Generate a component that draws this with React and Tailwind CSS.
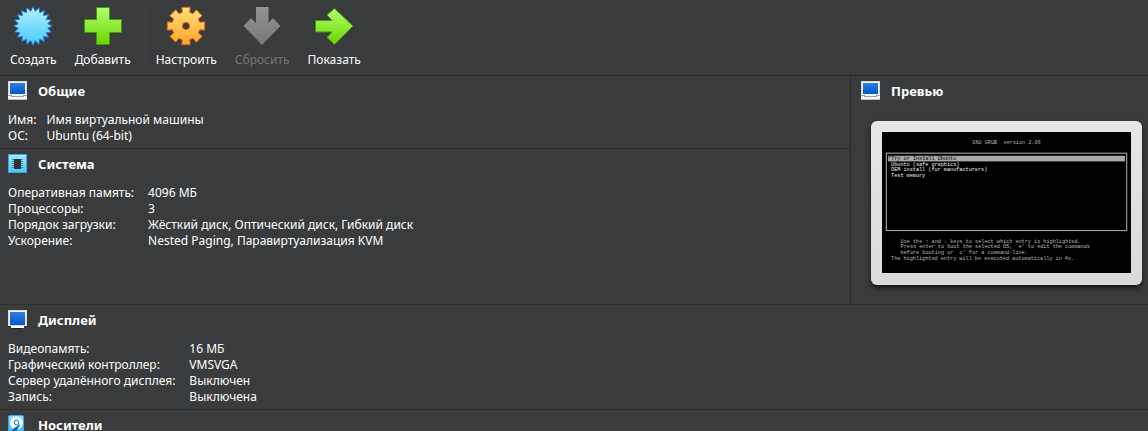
const starPoints = Array.from({ length: 40 }, (_, i) => {
  const r = i % 2 === 0 ? 19.4 : 15;
  const a = (i * Math.PI) / 20 - Math.PI / 2;
  return `${(20 + r * Math.cos(a)).toFixed(2)},${(20 + r * Math.sin(a)).toFixed(2)}`;
}).join(' ');

const gearPoints = Array.from({ length: 8 }, (_, i) => {
  const base = (i * 45 - 90) * (Math.PI / 180);
  return [[-0.27, 14.2], [-0.22, 19.2], [0.22, 19.2], [0.27, 14.2]]
    .map(([d, r]) => `${(20 + r * Math.cos(base + d)).toFixed(2)},${(20 + r * Math.sin(base + d)).toFixed(2)}`)
    .join(' ');
}).join(' ');

function Gradient({ id, from, to }) {
  return (
    <defs>
      <linearGradient id={id} x1="0" y1="0" x2="0" y2="1">
        <stop offset="0" stopColor={from} />
        <stop offset="1" stopColor={to} />
      </linearGradient>
    </defs>
  );
}

function ToolIcon({ children }) {
  return (
    <svg viewBox="0 0 40 40" className="size-10" aria-hidden="true">
      {children}
    </svg>
  );
}

const NewIcon = () => (
  <ToolIcon>
    <Gradient id="g-new" from="#b5f0ff" to="#45c8ff" />
    <polygon points={starPoints} fill="url(#g-new)" stroke="#1c6fc4" strokeWidth="1" />
  </ToolIcon>
);

const AddIcon = () => (
  <ToolIcon>
    <Gradient id="g-add" from="#b4ff6e" to="#66d400" />
    <path d="M13.5 1.5h13v12h12v13h-12v12h-13v-12h-12v-13h12z" fill="url(#g-add)" stroke="#3f9a08" />
  </ToolIcon>
);

const SettingsIcon = () => (
  <ToolIcon>
    <Gradient id="g-set" from="#ffe07a" to="#ffa526" />
    <polygon points={gearPoints} fill="url(#g-set)" stroke="#d0601a" strokeLinejoin="round" />
    <circle cx="20" cy="20" r="3.6" fill="#3a3b3c" stroke="#d0601a" />
  </ToolIcon>
);

const DiscardIcon = () => (
  <ToolIcon>
    <Gradient id="g-dis" from="#929393" to="#767777" />
    <path d="M14 1h12.500v16l4.500-5L38.500 20 20 39 1.500 20 9 12l5 5z" fill="url(#g-dis)" />
  </ToolIcon>
);

const ShowIcon = () => (
  <ToolIcon>
    <Gradient id="g-show" from="#b4ff6e" to="#66d400" />
    <path d="M1.5 14.5h16.500l-5-5.500 7.500-6.500L39 20 20.500 38.500 13 31.500l5-5.500H1.500z" fill="url(#g-show)" stroke="#3f9a08" />
  </ToolIcon>
);

function SmallIcon({ children }) {
  return (
    <svg viewBox="0 0 20 20" className="size-5 shrink-0" aria-hidden="true">
      {children}
    </svg>
  );
}

const MachineIcon = ({ id }) => (
  <SmallIcon>
    <Gradient id={id} from="#2f80dc" to="#0058cc" />
    <rect x="0.5" y="0.5" width="18" height="14" fill="#f4f4f4" stroke="#d8d8d8" />
    <rect x="2" y="2" width="15" height="11" fill={`url(#${id})`} />
    <rect x="0" y="14" width="19" height="5" fill="#f4f4f4" />
    <path d="M3.5 14v1.500h12V14M0.500 14.500h3M15.500 14.500h3" fill="none" stroke="#9a9a9a" />
    <path d="M0 18.500h19" stroke="#bdbdbd" />
  </SmallIcon>
);

const ChipIcon = () => (
  <SmallIcon>
    <Gradient id="g-chip" from="#a4e9ff" to="#45c4fb" />
    <rect x="0.5" y="0.5" width="18" height="18" fill="url(#g-chip)" stroke="#3aa6e6" />
    <path d="M4 5.500h2M4 7.500h2M4 9.500h2M4 11.500h2M4 13.500h2M13 5.500h2M13 7.500h2M13 9.500h2M13 11.500h2M13 13.500h2" stroke="#5a7f90" />
    <rect x="6" y="5" width="7" height="10" fill="#333" />
  </SmallIcon>
);

const DisplayIcon = () => (
  <SmallIcon>
    <Gradient id="g-display" from="#2f80dc" to="#0058cc" />
    <rect x="0.5" y="0.5" width="18" height="15" fill="#f4f4f4" stroke="#d8d8d8" />
    <rect x="2" y="2" width="15" height="13" fill="url(#g-display)" />
    <path d="M3 16h13v2H3z" fill="#fff" />
    <path d="M5 18.500h9" stroke="#222" />
  </SmallIcon>
);

const DiskIcon = () => (
  <SmallIcon>
    <Gradient id="g-disk" from="#8fdcff" to="#35b4f5" />
    <rect x="0.5" y="0.5" width="15" height="19" rx="1" fill="url(#g-disk)" stroke="#3aa6e6" />
    <circle cx="8.5" cy="8" r="6.5" fill="#eefaff" />
    <circle cx="8.500" cy="7.500" r="2.300" fill="none" stroke="#1670b8" />
    <path d="M11.500 10 5 14.500 3.500 17.500l4-1z" fill="#0f66b0" stroke="#0f66b0" />
  </SmallIcon>
);

function ToolButton({ icon, label, disabled }) {
  return (
    <button
      type="button"
      disabled={disabled}
      className="flex flex-col items-center gap-1 px-2 text-white disabled:text-[#767777]"
    >
      {icon}
      <span className="leading-5">{label}</span>
    </button>
  );
}

function Section({ icon, title, rows, gap = 'gap-x-3.5', className = '' }) {
  return (
    <section className={`border-b border-[#2c2d2e] px-2 pb-1 ${className}`}>
      <SectionTitle icon={icon} title={title} />
      {rows && (
        <dl className={`grid grid-cols-[max-content_1fr] ${gap}`}>
          {rows.map(([name, value]) => (
            <div key={name} className="contents">
              <dt>{name}</dt>
              <dd>{value}</dd>
            </div>
          ))}
        </dl>
      )}
    </section>
  );
}

function SectionTitle({ icon, title }) {
  return (
    <h2 className="flex h-9 items-start gap-2.5 pt-1 text-[13px] leading-[22px] font-bold">
      <span className="pt-px">{icon}</span>
      {title}
    </h2>
  );
}

function GuestScreen() {
  return (
    <svg viewBox="0 0 576 326" className="block w-full bg-black" role="img" aria-label="GNU GRUB">
      <rect x="10" y="49" width="556" height="179" fill="none" stroke="#a8a8a8" strokeWidth="2.5" />
      <rect x="14" y="55" width="548" height="13" fill="#a8a8a8" />
      <g fontSize="12" fill="#b8b8b8" className="font-['Liberation_Mono',monospace]">
        <text x="288" y="27" textAnchor="middle">{'GNU GRUB\u00a0\u00a0version 2.06'}</text>
        <text x="14" y="65" fill="#000">*Try or Install Ubuntu</text>
        <g fill="#f0f0f0">
          <text x="21" y="78">Ubuntu (safe graphics)</text>
          <text x="21" y="91">OEM install (for manufacturers)</text>
          <text x="21" y="104">Test memory</text>
        </g>
        <text x="43" y="256">Use the ↑ and ↓ keys to select which entry is highlighted.</text>
        <text x="43" y="269">Press enter to boot the selected OS, `e' to edit the commands</text>
        <text x="43" y="282">before booting or `c' for a command-line.</text>
        <text x="21" y="295">The highlighted entry will be executed automatically in 4s.</text>
      </g>
    </svg>
  );
}

export default function App() {
  return (
    <div className="h-screen overflow-hidden bg-[#3a3b3c] font-['Noto_Sans',sans-serif] text-[12px] leading-4 text-white">
      <header className="flex items-start gap-0.5 border-b border-[#2c2d2e] px-0.5 pt-1.5 pb-[5px]">
        <ToolButton icon={<NewIcon />} label="Создать" />
        <ToolButton icon={<AddIcon />} label="Добавить" />
        <div className="my-1 ml-1 w-px self-stretch bg-[#434445]" />
        <ToolButton icon={<SettingsIcon />} label="Настроить" />
        <ToolButton icon={<DiscardIcon />} label="Сбросить" disabled />
        <ToolButton icon={<ShowIcon />} label="Показать" />
      </header>
      <main>
        <div className="flex border-b border-[#2c2d2e]">
          <div className="flex min-w-0 flex-1 flex-col">
            <Section
              icon={<MachineIcon id="g-general" />}
              title="Общие"
              gap="gap-x-2.5"
              rows={[
                ['Имя:', 'Имя виртуальной машины'],
                ['ОС:', 'Ubuntu (64-bit)'],
              ]}
            />
            <Section
              icon={<ChipIcon />}
              title="Система"
              className="flex-1 border-b-0"
              rows={[
                ['Оперативная память:', '4096 МБ'],
                ['Процессоры:', '3'],
                ['Порядок загрузки:', 'Жёсткий диск, Оптический диск, Гибкий диск'],
                ['Ускорение:', 'Nested Paging, Паравиртуализация KVM'],
              ]}
            />
          </div>
          <aside className="w-[298px] shrink-0 border-l border-[#2c2d2e] pr-1.5 pb-[19px] pl-2.5">
            <SectionTitle icon={<MachineIcon id="g-preview" />} title="Превью" />
            <div className="mt-[9px] ml-2.5 rounded-md bg-linear-to-b from-[#e6e6e6] to-[#dadada] px-[11px] pt-[11px] pb-3 shadow-md shadow-black/60">
              <GuestScreen />
            </div>
          </aside>
        </div>
        <Section
          icon={<DisplayIcon />}
          title="Дисплей"
          rows={[
            ['Видеопамять:', '16 МБ'],
            ['Графический контроллер:', 'VMSVGA'],
            ['Сервер удалённого дисплея:', 'Выключен'],
            ['Запись:', 'Выключена'],
          ]}
        />
        <Section icon={<DiskIcon />} title="Носители" />
      </main>
    </div>
  );
}
